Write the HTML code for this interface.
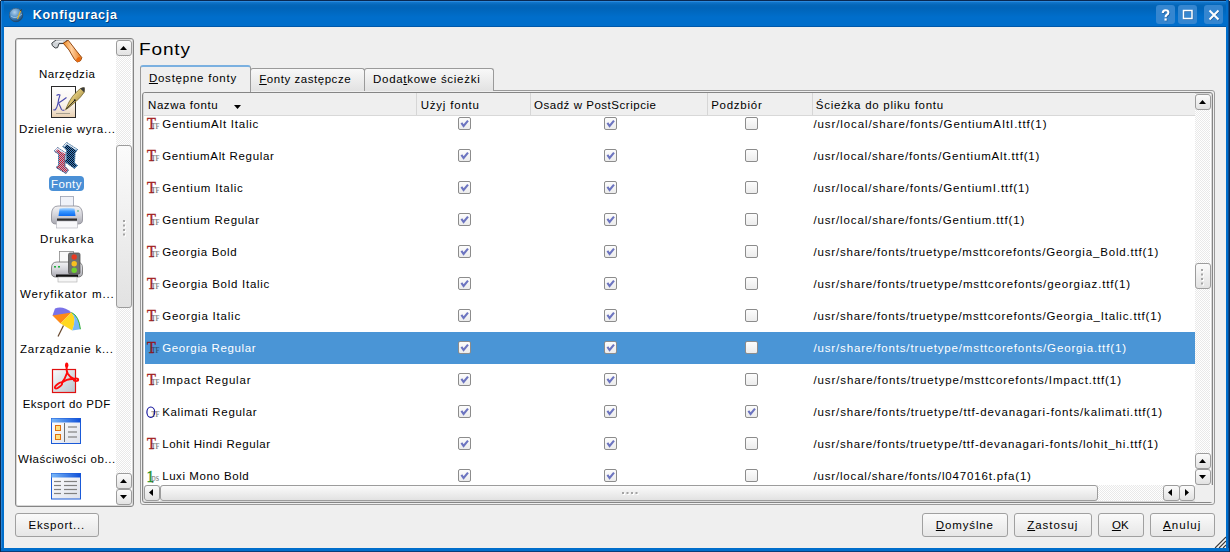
<!DOCTYPE html>
<html><head><meta charset="utf-8">
<style>
*{box-sizing:border-box;margin:0;padding:0}
html,body{width:1230px;height:552px;overflow:hidden;background:#0b66c2;font-family:"Liberation Sans",sans-serif;font-size:13px;color:#000}
.a{position:absolute}
#tb{left:0;top:0;width:1230px;height:27px;background:linear-gradient(#0a2850 0,#0a2850 1px,#2a8ade 1px,#2a8ade 2px,#1276cc 2px,#0466b8 5px,#0064b8 8px,#006ecb 17px,#006ecb 26px,#0058aa 26px)}
#lb{left:0;top:1px;width:4px;height:551px;background:linear-gradient(90deg,#0a2a50 0,#0a2a50 1px,#2a84d6 1px,#2a84d6 2px,#006ecb 2px)}
#rb{left:1226px;top:0;width:4px;height:552px;background:linear-gradient(90deg,#006ecb 0,#006ecb 2px,#0a4a90 2px,#0a4a90 3px,#0a2c58 3px)}
#bb{left:1px;top:548px;width:1228px;height:4px;background:linear-gradient(#006ecb 0,#006ecb 3px,#0a3c78 3px)}
#ct{left:4px;top:27px;width:1222px;height:521px;background:#efefef}
.ttl{left:33px;top:7px;color:#fff;font-weight:bold;font-size:12.5px;letter-spacing:0.6px;text-shadow:1px 1px 0 rgba(0,0,40,.55)}
.wb{width:19px;height:19px;top:5px;background:#3586d0;border-radius:3px}
.frame{border:1px solid #858585;border-radius:3px;background:#fff;box-shadow:inset 0 0 0 1px #d8d8d8}
.btn{border:1px solid #a0a0a0;border-radius:3px;background:linear-gradient(#fafafa,#e6e6e6);text-align:center;font-size:13px;line-height:21px}
.sbtn{border:1px solid #9c9c9c;border-radius:3px;background:linear-gradient(#fbfbfb,#e2e2e2)}
.track{background:repeating-conic-gradient(#e9e9e9 0 25%,#fff 0 50%) 0 0/2px 2px}
.lbl{font-size:12px;text-align:center;width:101px;left:16px;white-space:nowrap;letter-spacing:.2px}
.row{left:145px;width:1050px;height:32px}
.txt{white-space:nowrap}
.t{white-space:nowrap;line-height:normal}
.hd{font-size:12.5px;margin-top:1px}
.path{letter-spacing:0.15px}
.tab{border:1px solid #9a9a9a;border-bottom:none;border-radius:3px 3px 0 0;background:linear-gradient(#f8f8f8,#e2e2e2);padding-top:3px;text-align:center;font-size:12.5px;letter-spacing:.15px}
.act{background:#efefef;border-top:2px solid #7ab0e0;padding-top:4px;text-indent:-5px}
.cb{width:13px;height:13px;border:1px solid #8c8c8c;border-radius:2px;background:linear-gradient(#fcfcfc,#ececec)}
.cb svg{position:absolute;left:1px;top:1px}
</style></head><body>
<div id="tb" class="a"></div>
<div id="lb" class="a"></div>
<div id="rb" class="a"></div>
<div id="bb" class="a"></div>
<div id="ct" class="a"></div>
<!-- title -->
<div class="a" style="left:9px;top:8px;width:14px;height:14px;border-radius:50%;background:radial-gradient(circle at 40% 30%,#a8c8e8,#3a78b0 60%,#1a4870)"></div>
<svg class="a" style="left:9px;top:8px" width="16" height="16" viewBox="0 0 16 16"><defs><radialGradient id="glb" cx=".4" cy=".3" r=".7"><stop offset="0" stop-color="#b0d0ec"/><stop offset=".6" stop-color="#4a88c0"/><stop offset="1" stop-color="#1a4a78"/></radialGradient></defs><circle cx="7" cy="7" r="6.8" fill="url(#glb)" stroke="#20405a" stroke-width=".5"/><path d="M2 8 Q6 12 13 6" fill="none" stroke="#d8ecf8" stroke-width=".8" opacity=".7"/><path d="M8.5 11 L11.5 3" stroke="#e8b020" stroke-width="1.2"/><path d="M11.5 3 L12.5 1.5" stroke="#503010" stroke-width="1"/></svg>
<div class="a wb" style="left:1156px"><svg class="a" style="left:0;top:0" width="19" height="19" viewBox="0 0 19 19"><g transform="translate(.7 .7)" opacity=".45"><path d="M6.8 8 Q6.8 5.2 9.6 5.2 Q12.4 5.2 12.4 7.6 Q12.4 9.2 10.6 10 Q9.6 10.5 9.6 12.2" fill="none" stroke="#0a3060" stroke-width="2.1"/><rect x="8.5" y="13.4" width="2.2" height="2.2" fill="#0a3060"/></g><path d="M6.8 8 Q6.8 5.2 9.6 5.2 Q12.4 5.2 12.4 7.6 Q12.4 9.2 10.6 10 Q9.6 10.5 9.6 12.2" fill="none" stroke="#fff" stroke-width="2.1"/><rect x="8.5" y="13.4" width="2.2" height="2.2" fill="#fff"/></svg></div>
<div class="a wb" style="left:1178px"><svg class="a" style="left:0;top:0" width="19" height="19" viewBox="0 0 19 19"><rect x="6" y="6" width="8.5" height="8" fill="none" stroke="#0a3060" stroke-opacity=".5" stroke-width="1.5"/><rect x="5.5" y="5.5" width="8.5" height="8" fill="none" stroke="#fff" stroke-width="1.5"/></svg></div>
<div class="a wb" style="left:1204px"><svg class="a" style="left:0;top:0" width="19" height="19" viewBox="0 0 19 19"><path d="M5.5 5.5L14.5 14.5M14.5 5.5L5.5 14.5" stroke="#0a3060" stroke-opacity=".5" stroke-width="2" transform="translate(.6 .6)"/><path d="M5.5 5.5L14.5 14.5M14.5 5.5L5.5 14.5" stroke="#fff" stroke-width="2"/></svg></div>

<!-- sidebar -->
<div class="a frame" style="left:15px;top:38px;width:119px;height:469px"></div>
<svg class="a" style="left:0;top:0" width="140" height="552" viewBox="0 0 140 552">
<defs>
<clipPath id="sbc"><rect x="17" y="40" width="99" height="465"/></clipPath>
<linearGradient id="hnd" x1="0" y1="0" x2="1" y2="0"><stop offset="0" stop-color="#f08a20"/><stop offset=".45" stop-color="#ffd0a0"/><stop offset="1" stop-color="#e87818"/></linearGradient>
<linearGradient id="doc" x1="0" y1="0" x2="0" y2="1"><stop offset="0" stop-color="#fff"/><stop offset=".6" stop-color="#f8f2ea"/><stop offset="1" stop-color="#e8cfb0"/></linearGradient>
<linearGradient id="gold" x1="0" y1="0" x2="1" y2="1"><stop offset="0" stop-color="#fff8d0"/><stop offset=".45" stop-color="#d8c070"/><stop offset="1" stop-color="#7a6428"/></linearGradient>
<linearGradient id="pbody" x1="0" y1="0" x2="0" y2="1"><stop offset="0" stop-color="#f4f4f6"/><stop offset=".5" stop-color="#d4d4da"/><stop offset="1" stop-color="#a8a8b0"/></linearGradient>
<linearGradient id="pblue" x1="0" y1="0" x2="0" y2="1"><stop offset="0" stop-color="#bfe0ff"/><stop offset=".45" stop-color="#3a98ff"/><stop offset="1" stop-color="#0a6af0"/></linearGradient><linearGradient id="wtb" x1="0" y1="0" x2="1" y2="0"><stop offset="0" stop-color="#7ab8f8"/><stop offset="1" stop-color="#1050d8"/></linearGradient>
<linearGradient id="wbd" x1="0" y1="0" x2="1" y2="1"><stop offset="0" stop-color="#fff"/><stop offset="1" stop-color="#dde0ea"/></linearGradient>
<linearGradient id="pdfg" x1="0" y1="0" x2="1" y2="1"><stop offset="0" stop-color="#fafcfe"/><stop offset="1" stop-color="#b8c4cc"/></linearGradient>
<pattern id="chkR" width="2" height="2" patternUnits="userSpaceOnUse"><rect width="2" height="2" fill="#9ab8d8"/><rect width="1" height="1" fill="#e01020"/><rect x="1" y="1" width="1" height="1" fill="#e01020"/></pattern><pattern id="chkB" width="2" height="2" patternUnits="userSpaceOnUse"><rect width="2" height="2" fill="#3a80c0"/><rect width="1" height="1" fill="#0a1020"/><rect x="1" y="1" width="1" height="1" fill="#0a1020"/></pattern>
</defs>
<g clip-path="url(#sbc)">
<!-- hammer -->
<path d="M51.8 43.2 L56.2 39.8 L68 39.2 L64.5 43.5 L59 43.6 L57.6 47.6 L55.2 48 L52.3 45.6 Z" fill="#d0d4d8" stroke="#3a3e42" stroke-width="1" stroke-linejoin="round"/><path d="M55.5 42 L63 41.2" stroke="#f4f6f8" stroke-width="1"/>
<path d="M63.2 43.2 L68.2 40.2 L76.5 51 L81.8 57.5 Q81.5 61.5 77.5 62 L74.5 59.5 L69 50 Z" fill="url(#hnd)" stroke="#8a3a00" stroke-width=".9" stroke-linejoin="round"/><ellipse cx="78.5" cy="59.5" rx="2.6" ry="2" transform="rotate(-40 78.5 59.5)" fill="#e86a10"/>
<!-- document + pen -->
<rect x="51.5" y="86.5" width="24" height="31" fill="url(#doc)" stroke="#2a2a2a" stroke-width="1"/>
<path d="M56.5 95.5 Q58.5 94 60 95 Q58.5 99 58 103 Q57 108 55.5 109.5 Q54.5 110.5 53.5 109.5" fill="none" stroke="#4a4ab0" stroke-width="1.1"/>
<path d="M66.5 97.5 Q62 101 58.5 103 Q60 106 61.5 109.5 Q62.5 110.8 64.5 110" fill="none" stroke="#4a4ab0" stroke-width="1.1"/>
<line x1="56" y1="113.5" x2="70" y2="113.5" stroke="#a8a090" stroke-width="1"/>
<path d="M65.5 109.8 L69 102 Q72 96 77.5 91 L80.5 88.5 Q83 87 84.5 88.5 L84 92.5 Q81 97 76 101.5 L69.5 107 Z" fill="url(#gold)" stroke="#6a5a20" stroke-width=".7"/>
<path d="M80 88.5 L84.5 92.5 L84.5 87 Z" fill="#3a3a3a"/>
<line x1="66.3" y1="109" x2="74.5" y2="100.5" stroke="#1a1a1a" stroke-width=".9"/>
<circle cx="74.8" cy="100.3" r="1" fill="#1a1a1a"/>
<!-- fonts icon -->
<path d="M63 146.5 L66.5 142.5 L77.5 149.5 L75 153 L74.5 163 L77.5 165.5 L74.5 168.5 L64.5 161.5 L66.5 159.5 L66.5 150 Z" fill="url(#chkB)" stroke="#101828" stroke-width="1" stroke-dasharray="1 1"/>
<path d="M63 146.5 L66.5 142.5 L77.5 149.5 L75 153 L74.5 163 L77.5 165.5 L74.5 168.5 L64.5 161.5 L66.5 159.5 L66.5 150 Z" fill="none" stroke="#5aa8e8" stroke-width=".6" opacity=".8"/>
<path d="M54 151 L57.5 147.5 L66.5 153.5 L65 156 L65 166.5 L68.5 170 L66 173.5 L56 167.5 L58.5 165.5 L58.5 154 Z" fill="url(#chkR)" stroke="#101828" stroke-width="1" stroke-dasharray="1 1"/>
<path d="M54 151 L57.5 147.5 L66.5 153.5 L65 156 L65 166.5 L68.5 170 L66 173.5 L56 167.5 L58.5 165.5 L58.5 154 Z" fill="none" stroke="#5aa8e8" stroke-width=".6" opacity=".8"/>
<path d="M55 151 L57.5 148.5 L65.5 153.8" stroke="#e8f4ff" stroke-width="1.2" fill="none"/>
<path d="M64 146.5 L66.5 143.5 L76.5 149.8" stroke="#e8f4ff" stroke-width="1.2" fill="none"/>
<!-- printer -->
<rect x="60.5" y="196.5" width="13" height="13" fill="#f0f2f8" stroke="#9aa0b0" stroke-width=".8"/>
<path d="M51.5 215 Q51.5 206 58 206 L76 206 Q82.5 206 82.5 215 L82.5 220 Q82.5 224 78 224 L56 224 Q51.5 224 51.5 220 Z" fill="url(#pbody)" stroke="#8a8a94" stroke-width=".8"/>
<path d="M59.5 208.5 Q67 207 74.5 208.5 L75.5 216 L58.5 216 Z" fill="url(#pblue)"/>
<rect x="57" y="218.5" width="20" height="2.5" fill="#303030"/>
<rect x="56.5" y="221" width="21" height="7" fill="#f8f8fa" stroke="#b0b0b8" stroke-width=".6"/>
<circle cx="78" cy="211" r=".8" fill="#30a060"/>
<!-- printer + traffic light -->
<rect x="59.5" y="251.5" width="14" height="11" fill="#fafafa" stroke="#8a8a8a" stroke-width=".8"/>
<path d="M51.5 268 Q51.5 262 57 262 L77 262 Q82.5 262 82.5 268 L82.5 273 Q82.5 277 78 277 L56 277 Q51.5 277 51.5 273 Z" fill="url(#pbody)" stroke="#6a6a6a" stroke-width=".8"/>
<rect x="56" y="274.5" width="22" height="2.5" fill="#111"/>
<rect x="58" y="277" width="19" height="5" fill="#f6f6f6" stroke="#aaa" stroke-width=".6"/>
<rect x="68.5" y="253" width="11.5" height="21" rx="1.5" fill="#707070" stroke="#505050" stroke-width=".8"/>
<circle cx="74.2" cy="257" r="2.7" fill="#e83a20"/>
<circle cx="74.2" cy="263.8" r="2.7" fill="#f8c020"/>
<circle cx="74.2" cy="270.3" r="2.7" fill="#70d030"/>
<rect x="54" y="266" width="2" height="1.6" fill="#20b040"/><rect x="58" y="266" width="2" height="1.6" fill="#20b040"/>
<!-- umbrella -->
<line x1="63.5" y1="325.5" x2="58" y2="336.5" stroke="#6a4a30" stroke-width="1.3"/>
<path d="M52.5 315.5 Q57 309 71.5 312.5 L60.5 323.5 Z" fill="#ff8a18"/>
<path d="M55 308.5 Q63 305.5 71.5 312.5 L52.5 315.5 Z" fill="#7a72e8"/>
<path d="M60.5 323.5 L71.5 312.5 Q77 318 72.2 330.5 Z" fill="#ffd820"/>
<path d="M71.5 312.5 Q79 316 80.4 329.2 L72.2 330.5 Q77 318 71.5 312.5 Z" fill="#78b8f8"/>
<path d="M71.5 312.5 Q79 316 80.4 329.2" fill="none" stroke="#30b030" stroke-width="1"/>
<!-- pdf -->
<rect x="52.5" y="369.5" width="23" height="23" fill="url(#pdfg)" stroke="#e01010" stroke-width="1.2"/>
<g fill="none" stroke="#ff0a0a" stroke-width="1.9" stroke-linecap="round">
<ellipse cx="66.7" cy="365.3" rx="1.7" ry="2.9" fill="#ff0a0a" stroke="none"/>
<path d="M66.6 367 Q66.3 371 67.6 373.5 Q70 377.5 74 379"/>
<ellipse cx="76" cy="379.8" rx="2.2" ry="1.3"/>
<path d="M67.2 372.5 Q65 379 62 382.5"/>
<path d="M74 379 Q67 378.5 62 382.5"/>
<ellipse cx="58.5" cy="385.5" rx="4.3" ry="1.7" transform="rotate(-38 58.5 385.5)"/>
</g>
<!-- properties window -->
<rect x="51.5" y="418.5" width="29" height="25" fill="url(#wbd)" stroke="#1a5ad8" stroke-width="1"/>
<rect x="51.5" y="418.5" width="29" height="4" fill="url(#wtb)"/>
<rect x="55.5" y="425.5" width="5" height="5" fill="#ffe080" stroke="#e07010" stroke-width="1"/>
<rect x="55.5" y="434.5" width="5" height="5" fill="#ffe080" stroke="#e07010" stroke-width="1"/>
<line x1="64.5" y1="423" x2="64.5" y2="442" stroke="#707070" stroke-width="1"/>
<line x1="68" y1="427" x2="77" y2="427" stroke="#808080" stroke-width="1.2"/>
<line x1="68" y1="432" x2="77" y2="432" stroke="#808080" stroke-width="1.2"/>
<line x1="68" y1="437" x2="77" y2="437" stroke="#808080" stroke-width="1.2"/>
<!-- list window -->
<rect x="51.5" y="473.5" width="29" height="25.5" fill="url(#wbd)" stroke="#1a5ad8" stroke-width="1"/>
<rect x="51.5" y="473.5" width="29" height="4" fill="url(#wtb)"/>
<g stroke="#808080" stroke-width="1.2">
<line x1="54" y1="481.5" x2="61" y2="481.5"/><line x1="64" y1="481.5" x2="77" y2="481.5"/>
<line x1="54" y1="485.5" x2="61" y2="485.5"/><line x1="64" y1="485.5" x2="77" y2="485.5"/>
<line x1="54" y1="489.5" x2="61" y2="489.5"/><line x1="64" y1="489.5" x2="77" y2="489.5"/>
<line x1="54" y1="493.5" x2="61" y2="493.5"/><line x1="64" y1="493.5" x2="77" y2="493.5"/>
</g>
</g>
</svg>
<div class="a" style="left:49px;top:176px;width:35px;height:15px;border-radius:4px;background:#4a90d6"></div>
<!-- sidebar scrollbar -->
<div class="a track" style="left:116px;top:40px;width:15px;height:465px"></div>
<div class="a sbtn" style="left:116px;top:40px;width:16px;height:16px"><svg class="a" style="left:3px;top:5px" width="7" height="4"><path d="M0 4H7L3.5 0Z" fill="#000"/></svg></div>
<div class="a sbtn" style="left:116px;top:145px;width:16px;height:163px"></div><svg class="a" style="left:123px;top:220px" width="3" height="17"><rect x="1" y="1.0" width="2" height="2" fill="#fff"/><rect x="0" y="0.0" width="2" height="2" fill="#a4a4a4"/><rect x="1" y="5.5" width="2" height="2" fill="#fff"/><rect x="0" y="4.5" width="2" height="2" fill="#a4a4a4"/><rect x="1" y="10.0" width="2" height="2" fill="#fff"/><rect x="0" y="9.0" width="2" height="2" fill="#a4a4a4"/><rect x="1" y="14.5" width="2" height="2" fill="#fff"/><rect x="0" y="13.5" width="2" height="2" fill="#a4a4a4"/></svg>
<div class="a sbtn" style="left:116px;top:473px;width:16px;height:16px"><svg class="a" style="left:3px;top:5px" width="7" height="4"><path d="M0 4H7L3.5 0Z" fill="#000"/></svg></div>
<div class="a sbtn" style="left:116px;top:489px;width:16px;height:16px"><svg class="a" style="left:3px;top:5px" width="7" height="4"><path d="M0 0H7L3.5 4Z" fill="#000"/></svg></div>

<!-- heading -->

<!-- tabs -->
<div class="a" style="left:140px;top:90px;width:1075px;height:415px;border:1px solid #9a9a9a;border-radius:0 3px 3px 3px;background:#efefef"></div>
<div class="a tab" style="left:250px;top:68px;width:115px;height:23px"></div>
<div class="a tab" style="left:364px;top:68px;width:130px;height:23px"></div>
<div class="a tab act" style="left:140px;top:65px;width:111px;height:27px"></div>
<div class="a frame" style="left:142px;top:92px;width:1071px;height:411px"></div>
<!-- header -->
<div class="a" style="left:144px;top:93px;width:1051px;height:23px;background:#efefef;border-bottom:1px solid #d8d8d8"></div>
<div class="a" style="left:416px;top:93px;width:1px;height:22px;background:#d6d6d6"></div>
<div class="a" style="left:530px;top:93px;width:1px;height:22px;background:#d6d6d6"></div>
<div class="a" style="left:707px;top:93px;width:1px;height:22px;background:#d6d6d6"></div>
<div class="a" style="left:812px;top:93px;width:1px;height:22px;background:#d6d6d6"></div>
<svg class="a" style="left:234px;top:105px" width="7" height="4"><path d="M0 0H7L3.5 4Z" fill="#000"/></svg>
<!-- viewport -->
<div class="a" style="left:144px;top:116px;width:1051px;height:369px;overflow:hidden"><div class="a" style="left:-144px;top:-116px;width:1230px;height:552px">
<svg class="a" style="left:146px;top:116px" width="16" height="16" viewBox="0 0 16 16"><text x="0" y="0" transform="translate(1.1 13) scale(.88 1)" font-family="Liberation Serif" font-size="16.5" fill="#9a0c0c" stroke="#9a0c0c" stroke-width=".45" opacity=".9">T</text><text x="0" y="0" transform="translate(5.2 12.8) scale(.78 1)" font-family="Liberation Serif" font-weight="bold" font-size="8.5" fill="#202020" opacity=".55">TF</text></svg>
<div class="a cb" style="left:458px;top:117px"><svg width="11" height="11" viewBox="0 0 11 11"><path d="M1.4 3.8 L3.6 7 L8 1.6" fill="none" stroke="#6c74c0" stroke-width="2.1" stroke-linejoin="miter"/></svg></div>
<div class="a cb" style="left:604px;top:117px"><svg width="11" height="11" viewBox="0 0 11 11"><path d="M1.4 3.8 L3.6 7 L8 1.6" fill="none" stroke="#6c74c0" stroke-width="2.1" stroke-linejoin="miter"/></svg></div>
<div class="a cb" style="left:745px;top:117px"></div>
<svg class="a" style="left:146px;top:148px" width="16" height="16" viewBox="0 0 16 16"><text x="0" y="0" transform="translate(1.1 13) scale(.88 1)" font-family="Liberation Serif" font-size="16.5" fill="#9a0c0c" stroke="#9a0c0c" stroke-width=".45" opacity=".9">T</text><text x="0" y="0" transform="translate(5.2 12.8) scale(.78 1)" font-family="Liberation Serif" font-weight="bold" font-size="8.5" fill="#202020" opacity=".55">TF</text></svg>
<div class="a cb" style="left:458px;top:149px"><svg width="11" height="11" viewBox="0 0 11 11"><path d="M1.4 3.8 L3.6 7 L8 1.6" fill="none" stroke="#6c74c0" stroke-width="2.1" stroke-linejoin="miter"/></svg></div>
<div class="a cb" style="left:604px;top:149px"><svg width="11" height="11" viewBox="0 0 11 11"><path d="M1.4 3.8 L3.6 7 L8 1.6" fill="none" stroke="#6c74c0" stroke-width="2.1" stroke-linejoin="miter"/></svg></div>
<div class="a cb" style="left:745px;top:149px"></div>
<svg class="a" style="left:146px;top:180px" width="16" height="16" viewBox="0 0 16 16"><text x="0" y="0" transform="translate(1.1 13) scale(.88 1)" font-family="Liberation Serif" font-size="16.5" fill="#9a0c0c" stroke="#9a0c0c" stroke-width=".45" opacity=".9">T</text><text x="0" y="0" transform="translate(5.2 12.8) scale(.78 1)" font-family="Liberation Serif" font-weight="bold" font-size="8.5" fill="#202020" opacity=".55">TF</text></svg>
<div class="a cb" style="left:458px;top:181px"><svg width="11" height="11" viewBox="0 0 11 11"><path d="M1.4 3.8 L3.6 7 L8 1.6" fill="none" stroke="#6c74c0" stroke-width="2.1" stroke-linejoin="miter"/></svg></div>
<div class="a cb" style="left:604px;top:181px"><svg width="11" height="11" viewBox="0 0 11 11"><path d="M1.4 3.8 L3.6 7 L8 1.6" fill="none" stroke="#6c74c0" stroke-width="2.1" stroke-linejoin="miter"/></svg></div>
<div class="a cb" style="left:745px;top:181px"></div>
<svg class="a" style="left:146px;top:212px" width="16" height="16" viewBox="0 0 16 16"><text x="0" y="0" transform="translate(1.1 13) scale(.88 1)" font-family="Liberation Serif" font-size="16.5" fill="#9a0c0c" stroke="#9a0c0c" stroke-width=".45" opacity=".9">T</text><text x="0" y="0" transform="translate(5.2 12.8) scale(.78 1)" font-family="Liberation Serif" font-weight="bold" font-size="8.5" fill="#202020" opacity=".55">TF</text></svg>
<div class="a cb" style="left:458px;top:213px"><svg width="11" height="11" viewBox="0 0 11 11"><path d="M1.4 3.8 L3.6 7 L8 1.6" fill="none" stroke="#6c74c0" stroke-width="2.1" stroke-linejoin="miter"/></svg></div>
<div class="a cb" style="left:604px;top:213px"><svg width="11" height="11" viewBox="0 0 11 11"><path d="M1.4 3.8 L3.6 7 L8 1.6" fill="none" stroke="#6c74c0" stroke-width="2.1" stroke-linejoin="miter"/></svg></div>
<div class="a cb" style="left:745px;top:213px"></div>
<svg class="a" style="left:146px;top:244px" width="16" height="16" viewBox="0 0 16 16"><text x="0" y="0" transform="translate(1.1 13) scale(.88 1)" font-family="Liberation Serif" font-size="16.5" fill="#9a0c0c" stroke="#9a0c0c" stroke-width=".45" opacity=".9">T</text><text x="0" y="0" transform="translate(5.2 12.8) scale(.78 1)" font-family="Liberation Serif" font-weight="bold" font-size="8.5" fill="#202020" opacity=".55">TF</text></svg>
<div class="a cb" style="left:458px;top:245px"><svg width="11" height="11" viewBox="0 0 11 11"><path d="M1.4 3.8 L3.6 7 L8 1.6" fill="none" stroke="#6c74c0" stroke-width="2.1" stroke-linejoin="miter"/></svg></div>
<div class="a cb" style="left:604px;top:245px"><svg width="11" height="11" viewBox="0 0 11 11"><path d="M1.4 3.8 L3.6 7 L8 1.6" fill="none" stroke="#6c74c0" stroke-width="2.1" stroke-linejoin="miter"/></svg></div>
<div class="a cb" style="left:745px;top:245px"></div>
<svg class="a" style="left:146px;top:276px" width="16" height="16" viewBox="0 0 16 16"><text x="0" y="0" transform="translate(1.1 13) scale(.88 1)" font-family="Liberation Serif" font-size="16.5" fill="#9a0c0c" stroke="#9a0c0c" stroke-width=".45" opacity=".9">T</text><text x="0" y="0" transform="translate(5.2 12.8) scale(.78 1)" font-family="Liberation Serif" font-weight="bold" font-size="8.5" fill="#202020" opacity=".55">TF</text></svg>
<div class="a cb" style="left:458px;top:277px"><svg width="11" height="11" viewBox="0 0 11 11"><path d="M1.4 3.8 L3.6 7 L8 1.6" fill="none" stroke="#6c74c0" stroke-width="2.1" stroke-linejoin="miter"/></svg></div>
<div class="a cb" style="left:604px;top:277px"><svg width="11" height="11" viewBox="0 0 11 11"><path d="M1.4 3.8 L3.6 7 L8 1.6" fill="none" stroke="#6c74c0" stroke-width="2.1" stroke-linejoin="miter"/></svg></div>
<div class="a cb" style="left:745px;top:277px"></div>
<svg class="a" style="left:146px;top:308px" width="16" height="16" viewBox="0 0 16 16"><text x="0" y="0" transform="translate(1.1 13) scale(.88 1)" font-family="Liberation Serif" font-size="16.5" fill="#9a0c0c" stroke="#9a0c0c" stroke-width=".45" opacity=".9">T</text><text x="0" y="0" transform="translate(5.2 12.8) scale(.78 1)" font-family="Liberation Serif" font-weight="bold" font-size="8.5" fill="#202020" opacity=".55">TF</text></svg>
<div class="a cb" style="left:458px;top:309px"><svg width="11" height="11" viewBox="0 0 11 11"><path d="M1.4 3.8 L3.6 7 L8 1.6" fill="none" stroke="#6c74c0" stroke-width="2.1" stroke-linejoin="miter"/></svg></div>
<div class="a cb" style="left:604px;top:309px"><svg width="11" height="11" viewBox="0 0 11 11"><path d="M1.4 3.8 L3.6 7 L8 1.6" fill="none" stroke="#6c74c0" stroke-width="2.1" stroke-linejoin="miter"/></svg></div>
<div class="a cb" style="left:745px;top:309px"></div>
<div class="a" style="left:145px;top:332px;width:1050px;height:32px;background:#4a95d6"></div>
<svg class="a" style="left:146px;top:340px" width="16" height="16" viewBox="0 0 16 16"><text x="0" y="0" transform="translate(1.1 13) scale(.88 1)" font-family="Liberation Serif" font-size="16.5" fill="#9a0c0c" stroke="#9a0c0c" stroke-width=".45" opacity=".9">T</text><text x="0" y="0" transform="translate(5.2 12.8) scale(.78 1)" font-family="Liberation Serif" font-weight="bold" font-size="8.5" fill="#202020" opacity=".55">TF</text></svg>
<div class="a cb" style="left:458px;top:341px"><svg width="11" height="11" viewBox="0 0 11 11"><path d="M1.4 3.8 L3.6 7 L8 1.6" fill="none" stroke="#6c74c0" stroke-width="2.1" stroke-linejoin="miter"/></svg></div>
<div class="a cb" style="left:604px;top:341px"><svg width="11" height="11" viewBox="0 0 11 11"><path d="M1.4 3.8 L3.6 7 L8 1.6" fill="none" stroke="#6c74c0" stroke-width="2.1" stroke-linejoin="miter"/></svg></div>
<div class="a cb" style="left:745px;top:341px"></div>
<svg class="a" style="left:146px;top:372px" width="16" height="16" viewBox="0 0 16 16"><text x="0" y="0" transform="translate(1.1 13) scale(.88 1)" font-family="Liberation Serif" font-size="16.5" fill="#9a0c0c" stroke="#9a0c0c" stroke-width=".45" opacity=".9">T</text><text x="0" y="0" transform="translate(5.2 12.8) scale(.78 1)" font-family="Liberation Serif" font-weight="bold" font-size="8.5" fill="#202020" opacity=".55">TF</text></svg>
<div class="a cb" style="left:458px;top:373px"><svg width="11" height="11" viewBox="0 0 11 11"><path d="M1.4 3.8 L3.6 7 L8 1.6" fill="none" stroke="#6c74c0" stroke-width="2.1" stroke-linejoin="miter"/></svg></div>
<div class="a cb" style="left:604px;top:373px"><svg width="11" height="11" viewBox="0 0 11 11"><path d="M1.4 3.8 L3.6 7 L8 1.6" fill="none" stroke="#6c74c0" stroke-width="2.1" stroke-linejoin="miter"/></svg></div>
<div class="a cb" style="left:745px;top:373px"></div>
<svg class="a" style="left:146px;top:404px" width="16" height="16" viewBox="0 0 16 16"><ellipse cx="4.8" cy="8.2" rx="3.9" ry="5.2" fill="none" stroke="#10109a" stroke-width="1.15"/><text x="0" y="0" transform="translate(5.2 12.8) scale(.78 1)" font-family="Liberation Serif" font-weight="bold" font-size="8.5" fill="#202020" opacity=".55">TF</text></svg>
<div class="a cb" style="left:458px;top:405px"><svg width="11" height="11" viewBox="0 0 11 11"><path d="M1.4 3.8 L3.6 7 L8 1.6" fill="none" stroke="#6c74c0" stroke-width="2.1" stroke-linejoin="miter"/></svg></div>
<div class="a cb" style="left:604px;top:405px"><svg width="11" height="11" viewBox="0 0 11 11"><path d="M1.4 3.8 L3.6 7 L8 1.6" fill="none" stroke="#6c74c0" stroke-width="2.1" stroke-linejoin="miter"/></svg></div>
<div class="a cb" style="left:745px;top:405px"><svg width="11" height="11" viewBox="0 0 11 11"><path d="M1.4 3.8 L3.6 7 L8 1.6" fill="none" stroke="#6c74c0" stroke-width="2.1" stroke-linejoin="miter"/></svg></div>
<svg class="a" style="left:146px;top:436px" width="16" height="16" viewBox="0 0 16 16"><text x="0" y="0" transform="translate(1.1 13) scale(.88 1)" font-family="Liberation Serif" font-size="16.5" fill="#9a0c0c" stroke="#9a0c0c" stroke-width=".45" opacity=".9">T</text><text x="0" y="0" transform="translate(5.2 12.8) scale(.78 1)" font-family="Liberation Serif" font-weight="bold" font-size="8.5" fill="#202020" opacity=".55">TF</text></svg>
<div class="a cb" style="left:458px;top:437px"><svg width="11" height="11" viewBox="0 0 11 11"><path d="M1.4 3.8 L3.6 7 L8 1.6" fill="none" stroke="#6c74c0" stroke-width="2.1" stroke-linejoin="miter"/></svg></div>
<div class="a cb" style="left:604px;top:437px"><svg width="11" height="11" viewBox="0 0 11 11"><path d="M1.4 3.8 L3.6 7 L8 1.6" fill="none" stroke="#6c74c0" stroke-width="2.1" stroke-linejoin="miter"/></svg></div>
<div class="a cb" style="left:745px;top:437px"></div>
<svg class="a" style="left:146px;top:468px" width="16" height="16" viewBox="0 0 16 16"><text x="0" y="0" transform="translate(0.6 14) scale(.95 1)" font-family="Liberation Serif" font-size="16" fill="#108a10" stroke="#108a10" stroke-width=".5" opacity=".9">1</text><text x="0" y="0" transform="translate(5.5 12.8) scale(.85 1)" font-family="Liberation Serif" font-size="10" fill="#202020" opacity=".6">ps</text></svg>
<div class="a cb" style="left:458px;top:469px"><svg width="11" height="11" viewBox="0 0 11 11"><path d="M1.4 3.8 L3.6 7 L8 1.6" fill="none" stroke="#6c74c0" stroke-width="2.1" stroke-linejoin="miter"/></svg></div>
<div class="a cb" style="left:604px;top:469px"><svg width="11" height="11" viewBox="0 0 11 11"><path d="M1.4 3.8 L3.6 7 L8 1.6" fill="none" stroke="#6c74c0" stroke-width="2.1" stroke-linejoin="miter"/></svg></div>
<div class="a cb" style="left:745px;top:469px"></div>
</div></div>
<!-- vscroll -->
<div class="a track" style="left:1195px;top:94px;width:15px;height:391px"></div>
<div class="a sbtn" style="left:1195px;top:94px;width:16px;height:16px"><svg class="a" style="left:3px;top:5px" width="7" height="4"><path d="M0 4H7L3.5 0Z" fill="#000"/></svg></div>
<div class="a sbtn" style="left:1195px;top:263px;width:16px;height:26px"></div><svg class="a" style="left:1201px;top:269px" width="3" height="17"><rect x="1" y="1.0" width="2" height="2" fill="#fff"/><rect x="0" y="0.0" width="2" height="2" fill="#a4a4a4"/><rect x="1" y="5.5" width="2" height="2" fill="#fff"/><rect x="0" y="4.5" width="2" height="2" fill="#a4a4a4"/><rect x="1" y="10.0" width="2" height="2" fill="#fff"/><rect x="0" y="9.0" width="2" height="2" fill="#a4a4a4"/><rect x="1" y="14.5" width="2" height="2" fill="#fff"/><rect x="0" y="13.5" width="2" height="2" fill="#a4a4a4"/></svg>
<div class="a sbtn" style="left:1195px;top:453px;width:16px;height:16px"><svg class="a" style="left:3px;top:5px" width="7" height="4"><path d="M0 4H7L3.5 0Z" fill="#000"/></svg></div>
<div class="a sbtn" style="left:1195px;top:469px;width:16px;height:16px"><svg class="a" style="left:3px;top:5px" width="7" height="4"><path d="M0 0H7L3.5 4Z" fill="#000"/></svg></div>
<!-- hscroll -->
<div class="a track" style="left:144px;top:485px;width:1051px;height:16px"></div>
<div class="a sbtn" style="left:144px;top:485px;width:16px;height:16px"><svg class="a" style="left:4px;top:3px" width="4" height="7"><path d="M4 0V7L0 3.5Z" fill="#000"/></svg></div>
<div class="a sbtn" style="left:160px;top:485px;width:938px;height:16px"></div><svg class="a" style="left:622px;top:492px" width="17" height="3"><rect x="1.0" y="1" width="2" height="2" fill="#fff"/><rect x="0.0" y="0" width="2" height="2" fill="#a4a4a4"/><rect x="5.5" y="1" width="2" height="2" fill="#fff"/><rect x="4.5" y="0" width="2" height="2" fill="#a4a4a4"/><rect x="10.0" y="1" width="2" height="2" fill="#fff"/><rect x="9.0" y="0" width="2" height="2" fill="#a4a4a4"/><rect x="14.5" y="1" width="2" height="2" fill="#fff"/><rect x="13.5" y="0" width="2" height="2" fill="#a4a4a4"/></svg>
<div class="a sbtn" style="left:1163px;top:485px;width:17px;height:16px"><svg class="a" style="left:4px;top:3px" width="4" height="7"><path d="M4 0V7L0 3.5Z" fill="#000"/></svg></div>
<div class="a sbtn" style="left:1179px;top:485px;width:16px;height:16px"><svg class="a" style="left:5px;top:3px" width="4" height="7"><path d="M0 0V7L4 3.5Z" fill="#000"/></svg></div>
<div class="a" style="left:1195px;top:485px;width:18px;height:17px;background:#efefef"></div>

<!-- bottom buttons -->
<div class="a btn" style="left:15px;top:513px;width:84px;height:24px"></div>
<div class="a btn" style="left:922px;top:513px;width:86px;height:24px"></div>
<div class="a btn" style="left:1014px;top:513px;width:78px;height:24px"></div>
<div class="a btn" style="left:1098px;top:513px;width:46px;height:24px"></div>
<div class="a btn" style="left:1150px;top:513px;width:65px;height:24px"></div>
<svg class="a" style="left:1212px;top:534px" width="14" height="14" viewBox="0 0 14 14"><g stroke-width="1.2"><path d="M2 14L14 2" stroke="#fff"/><path d="M3 14L14 3" stroke="#3a3a3a"/><path d="M6 14L14 6" stroke="#fff"/><path d="M7 14L14 7" stroke="#3a3a3a"/><path d="M10 14L14 10" stroke="#fff"/><path d="M11 14L14 11" stroke="#3a3a3a"/></g></svg>
<div class="a" style="left:0;top:0;width:1px;height:1px;background:#c8c0b0"></div><div class="a" style="left:1229px;top:0;width:1px;height:1px;background:#c8c0b0"></div>
<div class="a t" style="left:162.19px;top:118px;font-size:11.5px;font-weight:normal;color:#000;letter-spacing:0.778px;">GentiumAlt Italic</div>
<div class="a t" style="left:813.40px;top:118px;font-size:11.5px;font-weight:normal;color:#000;letter-spacing:0.906px;">/usr/local/share/fonts/GentiumAItI.ttf(1)</div>
<div class="a t" style="left:162.19px;top:150px;font-size:11.5px;font-weight:normal;color:#000;letter-spacing:0.666px;">GentiumAlt Regular</div>
<div class="a t" style="left:813.40px;top:150px;font-size:11.5px;font-weight:normal;color:#000;letter-spacing:0.847px;">/usr/local/share/fonts/GentiumAlt.ttf(1)</div>
<div class="a t" style="left:162.19px;top:182px;font-size:11.5px;font-weight:normal;color:#000;letter-spacing:0.797px;">Gentium Italic</div>
<div class="a t" style="left:813.40px;top:182px;font-size:11.5px;font-weight:normal;color:#000;letter-spacing:0.889px;">/usr/local/share/fonts/GentiumI.ttf(1)</div>
<div class="a t" style="left:162.19px;top:214px;font-size:11.5px;font-weight:normal;color:#000;letter-spacing:0.710px;">Gentium Regular</div>
<div class="a t" style="left:813.40px;top:214px;font-size:11.5px;font-weight:normal;color:#000;letter-spacing:0.869px;">/usr/local/share/fonts/Gentium.ttf(1)</div>
<div class="a t" style="left:162.19px;top:246px;font-size:11.5px;font-weight:normal;color:#000;letter-spacing:0.669px;">Georgia Bold</div>
<div class="a t" style="left:813.40px;top:246px;font-size:11.5px;font-weight:normal;color:#000;letter-spacing:0.834px;">/usr/share/fonts/truetype/msttcorefonts/Georgia_Bold.ttf(1)</div>
<div class="a t" style="left:162.19px;top:278px;font-size:11.5px;font-weight:normal;color:#000;letter-spacing:0.734px;">Georgia Bold Italic</div>
<div class="a t" style="left:813.40px;top:278px;font-size:11.5px;font-weight:normal;color:#000;letter-spacing:0.859px;">/usr/share/fonts/truetype/msttcorefonts/georgiaz.ttf(1)</div>
<div class="a t" style="left:162.19px;top:310px;font-size:11.5px;font-weight:normal;color:#000;letter-spacing:0.786px;">Georgia Italic</div>
<div class="a t" style="left:813.40px;top:310px;font-size:11.5px;font-weight:normal;color:#000;letter-spacing:0.844px;">/usr/share/fonts/truetype/msttcorefonts/Georgia_Italic.ttf(1)</div>
<div class="a t" style="left:162.19px;top:342px;font-size:11.5px;font-weight:normal;color:#fff;letter-spacing:0.649px;">Georgia Regular</div>
<div class="a t" style="left:813.40px;top:342px;font-size:11.5px;font-weight:normal;color:#fff;letter-spacing:0.857px;">/usr/share/fonts/truetype/msttcorefonts/Georgia.ttf(1)</div>
<div class="a t" style="left:162.19px;top:374px;font-size:11.5px;font-weight:normal;color:#000;letter-spacing:0.792px;">Impact Regular</div>
<div class="a t" style="left:813.40px;top:374px;font-size:11.5px;font-weight:normal;color:#000;letter-spacing:0.900px;">/usr/share/fonts/truetype/msttcorefonts/Impact.ttf(1)</div>
<div class="a t" style="left:162.19px;top:406px;font-size:11.5px;font-weight:normal;color:#000;letter-spacing:0.674px;">Kalimati Regular</div>
<div class="a t" style="left:813.40px;top:406px;font-size:11.5px;font-weight:normal;color:#000;letter-spacing:0.877px;">/usr/share/fonts/truetype/ttf-devanagari-fonts/kalimati.ttf(1)</div>
<div class="a t" style="left:162.19px;top:438px;font-size:11.5px;font-weight:normal;color:#000;letter-spacing:0.559px;">Lohit Hindi Regular</div>
<div class="a t" style="left:813.40px;top:438px;font-size:11.5px;font-weight:normal;color:#000;letter-spacing:0.853px;">/usr/share/fonts/truetype/ttf-devanagari-fonts/lohit_hi.ttf(1)</div>
<div class="a t" style="left:162.19px;top:470px;font-size:11.5px;font-weight:normal;color:#000;letter-spacing:0.561px;">Luxi Mono Bold</div>
<div class="a t" style="left:813.40px;top:470px;font-size:11.5px;font-weight:normal;color:#000;letter-spacing:0.835px;">/usr/local/share/fonts/l047016t.pfa(1)</div>
<div class="a t" style="left:148.00px;top:99px;font-size:11.5px;font-weight:normal;color:#000;letter-spacing:0.574px;">Nazwa fontu</div>
<div class="a t" style="left:420.69px;top:99px;font-size:11.5px;font-weight:normal;color:#000;letter-spacing:0.793px;">Użyj fontu</div>
<div class="a t" style="left:534.00px;top:99px;font-size:11.5px;font-weight:normal;color:#000;letter-spacing:0.533px;">Osadź w PostScripcie</div>
<div class="a t" style="left:711.20px;top:99px;font-size:11.5px;font-weight:normal;color:#000;letter-spacing:0.741px;">Podzbiór</div>
<div class="a t" style="left:815.80px;top:99px;font-size:11.5px;font-weight:normal;color:#000;letter-spacing:0.738px;">Ścieżka do pliku fontu</div>
<div class="a t" style="left:148.89px;top:72px;font-size:11.5px;font-weight:normal;color:#000;letter-spacing:0.771px;"><u>D</u>ostępne fonty</div>
<div class="a t" style="left:259.19px;top:73px;font-size:11.5px;font-weight:normal;color:#000;letter-spacing:0.546px;"><u>F</u>onty zastępcze</div>
<div class="a t" style="left:373.00px;top:73px;font-size:11.5px;font-weight:normal;color:#000;letter-spacing:0.715px;">Doda<u>t</u>kowe ścieżki</div>
<div class="a t" style="left:38.90px;top:68px;font-size:11.5px;font-weight:normal;color:#000;letter-spacing:0.525px;">Narzędzia</div>
<div class="a t" style="left:18.89px;top:123px;font-size:11.5px;font-weight:normal;color:#000;letter-spacing:0.738px;">Dzielenie wyra...</div>
<div class="a t" style="left:51.09px;top:178px;font-size:11.5px;font-weight:normal;color:#fff;letter-spacing:0.404px;">Fonty</div>
<div class="a t" style="left:39.99px;top:233px;font-size:11.5px;font-weight:normal;color:#000;letter-spacing:1.018px;">Drukarka</div>
<div class="a t" style="left:20.00px;top:288px;font-size:11.5px;font-weight:normal;color:#000;letter-spacing:0.898px;">Weryfikator m...</div>
<div class="a t" style="left:20.00px;top:343px;font-size:11.5px;font-weight:normal;color:#000;letter-spacing:0.743px;">Zarządzanie k...</div>
<div class="a t" style="left:22.70px;top:398px;font-size:11.5px;font-weight:normal;color:#000;letter-spacing:0.501px;">Eksport do PDF</div>
<div class="a t" style="left:18.00px;top:453px;font-size:11.5px;font-weight:normal;color:#000;letter-spacing:0.556px;">Właściwości ob...</div>
<div class="a t" style="left:28.59px;top:519px;font-size:11.5px;font-weight:normal;color:#000;letter-spacing:0.778px;">Eksport...</div>
<div class="a t" style="left:935.80px;top:519px;font-size:11.5px;font-weight:normal;color:#000;letter-spacing:0.863px;"><u>D</u>omyślne</div>
<div class="a t" style="left:1027.19px;top:519px;font-size:11.5px;font-weight:normal;color:#000;letter-spacing:0.959px;"><u>Z</u>astosuj</div>
<div class="a t" style="left:1111.89px;top:519px;font-size:11.5px;font-weight:normal;color:#000;letter-spacing:0.055px;"><u>O</u>K</div>
<div class="a t" style="left:1163.10px;top:519px;font-size:11.5px;font-weight:normal;color:#000;letter-spacing:1.062px;"><u>A</u>nuluj</div>
<div class="a t" style="left:32.73px;top:8px;font-size:12.5px;font-weight:bold;color:#fff;letter-spacing:0.709px;text-shadow:1px 1px 0 rgba(0,10,40,.5);">Konfiguracja</div>
<div class="a t" style="left:139.21px;top:40px;font-size:17px;font-weight:normal;color:#000;letter-spacing:0.748px;transform:scaleX(1.12);transform-origin:0 0;">Fonty</div>
</body></html>
